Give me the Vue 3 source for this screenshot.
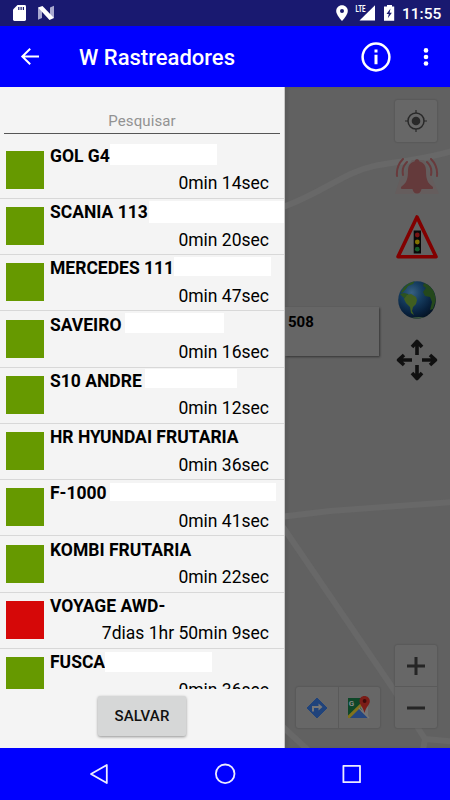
<script setup>
const GREEN = 'online'
const RED = 'offline'
const vehicles = [
  { name: 'GOL G4', time: '0min 14sec', state: GREEN, mask: 'm1' },
  { name: 'SCANIA 113', time: '0min 20sec', state: GREEN, mask: 'm2' },
  { name: 'MERCEDES 111', time: '0min 47sec', state: GREEN, mask: 'm3' },
  { name: 'SAVEIRO', time: '0min 16sec', state: GREEN, mask: 'm4' },
  { name: 'S10 ANDRE', time: '0min 12sec', state: GREEN, mask: 'm5' },
  { name: 'HR HYUNDAI FRUTARIA', time: '0min 36sec', state: GREEN },
  { name: 'F-1000', time: '0min 41sec', state: GREEN, mask: 'm7' },
  { name: 'KOMBI FRUTARIA', time: '0min 22sec', state: GREEN },
  { name: 'VOYAGE AWD-', time: '7dias 1hr 50min 9sec', state: RED },
  { name: 'FUSCA', time: '0min 36sec', state: GREEN, mask: 'm10' },
]
</script>

<template>
  <div class="screen">
    <header class="status">
      <svg class="left-icons" width="60" height="26" viewBox="0 0 60 26">
        <path d="M17.5 5H24.6Q26 5 26 6.4V19.6Q26 21 24.6 21H14.4Q13 21 13 19.6V9.5Z" fill="#fff" />
        <path d="M18.8 7v3M21.1 7v3M23.4 7v3" stroke="#191970" stroke-width="1.2" />
        <path d="M38 7.5L42 9v9L38 19.7ZM54 5.7V18L50 16.5V7.5Z" fill="#a9a9d0" />
        <path d="M38 7.5L42.5 6L54 18L49.5 20Z" fill="#fff" />
      </svg>
      <svg class="right-icons" width="70" height="26" viewBox="330 0 70 26">
        <path d="M342 5.3C338.7 5.3 336.200 7.800 336.200 11C336.200 15.200 342 21 342 21S347.800 15.200 347.800 11C347.800 7.800 345.300 5.300 342 5.300Z" fill="#fff" />
        <circle cx="342" cy="11" r="2" fill="#191970" />
        <path d="M375 5.300V20.500H359.500Z" fill="#fff" />
        <text class="lte" x="355.600" y="12.200" textLength="10" lengthAdjust="spacingAndGlyphs">LTE</text>
        <path d="M387 5h5v1.500h2.200v14.300h-10.200V6.500h3z" fill="#fff" />
        <path d="M390.500 8.500L386.500 14h2.300l-1 4.300L391.900 12.700h-2.300z" fill="#191970" />
      </svg>
      <span class="clock">11:55</span>
    </header>

    <div class="toolbar">
      <svg width="20" height="20" viewBox="0 0 20 20" class="back">
        <path d="M10.200 1.700L2.300 9.500L10.200 17.300M2.300 9.500H19" fill="none" stroke="#fff" stroke-width="2" />
      </svg>
      <h1>W Rastreadores</h1>
      <svg width="30" height="30" viewBox="0 0 30 30" class="info">
        <circle cx="15" cy="15" r="13.400" fill="none" stroke="#fff" stroke-width="2.500" />
        <path d="M13.500 7.500h3v2.900h-3zM13.500 12.700h3v9.500h-3z" fill="#fff" />
      </svg>
      <svg width="6" height="20" viewBox="0 0 6 20" class="more">
        <g fill="#fff"><circle cx="3" cy="3.400" r="2.300" /><circle cx="3" cy="10" r="2.300" /><circle cx="3" cy="16.500" r="2.300" /></g>
      </svg>
    </div>

    <main class="content">
      <aside class="drawer">
        <div class="search">Pesquisar</div>
        <ul class="list">
          <li v-for="v in vehicles" :key="v.name" class="row">
            <span class="square" :class="v.state"></span>
            <div class="details">
              <div class="name"><span class="label">{{ v.name }}</span><i v-if="v.mask" class="mask" :class="v.mask"></i></div>
              <div class="time">{{ v.time }}</div>
            </div>
          </li>
        </ul>
        <div class="footer"><button class="save">SALVAR</button></div>
      </aside>

      <section class="map">
        <svg class="roads" width="165" height="661" viewBox="285 87 165 661">
          <g fill="none" stroke="#686868" stroke-width="6" stroke-linejoin="round">
            <path d="M283 207C312 197 338 179 353 173C370 165 386 164 405 161C422 158 436 156 452 151" />
            <path d="M284 516.500L330 511L452 502" />
            <path d="M283 527L392 687L425 739L452 741.500M425 739L423 750" />
            <path d="M283 727L309 751" />
          </g>
        </svg>
        <div class="popup">508</div>
        <div class="tools">
          <div class="locate">
            <svg width="24" height="24" viewBox="0 0 24 24">
              <circle cx="12" cy="12" r="8" fill="none" stroke="#292929" stroke-width="1.500" />
              <circle cx="12" cy="12" r="4.300" fill="#292929" />
              <path d="M12 1v3M12 20v3M1 12h3M20 12h3" stroke="#292929" stroke-width="1.200" />
            </svg>
          </div>
          <svg class="bell" width="44" height="38" viewBox="0 0 44 38">
            <path d="M5 22L17 3H29L44 37H0Z" fill="#655d5d" />
            <path d="M22 2Q24 2 24.500 4.500C29 5.500 31 9 31 14C31 21 32 26 37.500 29.500Q39 31.500 37 32H26.500Q25.500 36.500 22 36.500T17.500 32H7Q5 31.500 6.500 29.500C12 26 13 21 13 14C13 9 15 5.500 19.500 4.500Q20 2 22 2Z" fill="#643a3b" />
            <g fill="none" stroke="#693a3c" stroke-width="2" stroke-linecap="round">
              <path d="M8 2Q1 9 2 19M12 5Q6.500 10 8 18M36 2Q43 9 42 19M32 5Q37.500 10 36 18" />
            </g>
          </svg>
          <svg class="warning" width="44" height="47" viewBox="0 0 44 47">
            <path d="M22 4L41 43.700H3Z" fill="#626262" stroke="#820000" stroke-width="3.600" stroke-linejoin="round" />
            <path d="M18.700 17.500h7.300v23h-7.300z" fill="#080808" />
            <circle cx="22.300" cy="22" r="2.400" fill="#781414" />
            <circle cx="22.300" cy="29" r="2.400" fill="#817100" />
            <circle cx="22.300" cy="36.200" r="2.400" fill="#145c2a" />
          </svg>
          <svg class="globe" width="40" height="40" viewBox="0 0 40 40">
            <defs>
              <radialGradient id="sea" cx=".36" cy=".3" r=".75">
                <stop offset="0" stop-color="#376080" /><stop offset=".35" stop-color="#173f62" />
                <stop offset=".75" stop-color="#08213d" /><stop offset="1" stop-color="#041222" />
              </radialGradient>
              <clipPath id="disc"><circle cx="20" cy="20" r="18.800" /></clipPath>
            </defs>
            <circle cx="20" cy="20" r="18.800" fill="url(#sea)" />
            <g clip-path="url(#disc)">
              <path d="M4 12L7 7L12 3L18 1L16 4L11 6L9 9L5 13ZM3 14L7 13L11 14L12 16L8 17L10 20L6 17Z" fill="#2c531f" />
              <path d="M10 15L14 14L19 17L20 20L19 24L16 27L15 31L17 35L14 33L13 27L9 23L7 19Z" fill="#405e20" />
              <path d="M27 3L32 5L37 11L39 20L36 29L33 30L35 22L33 17L28 16L26 12L29 8L26 6Z" fill="#24481c" />
              <path d="M14 38Q20 36.500 28 37.500V40H14Z" fill="#3c573e" />
            </g>
          </svg>
          <svg class="move" width="44" height="44" viewBox="0 0 44 44">
            <g fill="none" stroke="#101010" stroke-width="3.600" stroke-linejoin="round">
              <path d="M22 17V4M17 9L22 3.500L27 9" />
              <path d="M22 27V40M17 35L22 40.500L27 35" />
              <path d="M17 22H4M9 17L3.500 22L9 27" />
              <path d="M27 22H40M35 17L40.500 22L35 27" />
            </g>
          </svg>
        </div>
        <div class="links">
          <div class="link">
            <svg width="24" height="24" viewBox="0 0 24 24">
              <path d="M12 2L22 12L12 22L2 12Z" fill="#20437b" stroke="#20437b" stroke-linejoin="round" />
              <path d="M8 15.500V11H15" fill="none" stroke="#777" stroke-width="2" />
              <path d="M13.500 7.500L17.500 11L13.500 14.500Z" fill="#777" />
            </svg>
          </div>
          <div class="link">
            <svg width="26" height="26" viewBox="0 0 26 26">
              <path d="M2 3H20V12L5 23H2Z" fill="#0e4728" />
              <path d="M12 13L22 23H4Z" fill="#25467f" />
              <path d="M14 12L22 4V23Z" fill="#747474" />
              <path d="M2 20.500L16 7L18 9L4 23H2Z" fill="#81721d" />
              <path d="M13 13L23 23" stroke="#777" stroke-width="1.500" />
              <path d="M18.500 1C15.500 1 13.500 3.300 13.500 6C13.500 10 17.200 12 18.500 18C19.800 12 23.800 10 23.800 6C23.800 3.300 21.500 1 18.500 1Z" fill="#7b1d18" />
              <circle cx="18.600" cy="6" r="1.900" fill="#3c0b0a" />
              <text class="g" x="2.700" y="10.800">G</text>
            </svg>
          </div>
        </div>
        <div class="zoom">
          <div class="zoom-btn"><svg width="20" height="20" viewBox="0 0 20 20"><path d="M10 1v18M1 10h18" stroke="#252525" stroke-width="3" /></svg></div>
          <div class="zoom-btn"><svg width="20" height="20" viewBox="0 0 20 20"><path d="M1 10h18" stroke="#252525" stroke-width="3" /></svg></div>
        </div>
      </section>
    </main>

    <nav class="navbar">
      <svg width="450" height="52" viewBox="0 0 450 52">
        <g fill="none" stroke="#ebebff" stroke-width="1.800" stroke-linejoin="round">
          <path d="M106.800 17V35L91 26Z" />
          <circle cx="225.200" cy="25.800" r="9.300" />
          <rect x="343.400" y="17.800" width="16.600" height="16.400" />
        </g>
      </svg>
    </nav>
  </div>
</template>

<style>
body { margin: 0; overflow: hidden; }
</style>

<style scoped>
.screen { width: 450px; height: 800px; display: flex; flex-direction: column; overflow: hidden; font-family: Roboto, sans-serif; color: #000; }
.status { height: 26px; flex: none; display: flex; background: #191970; }
.right-icons { margin-left: 270px; }
.lte { font: bold 9px Roboto, sans-serif; fill: #fff; }
.clock { width: 50px; box-sizing: border-box; padding-left: 2px; color: #fff; font-size: 15.500px; font-weight: 500; line-height: 28px; white-space: nowrap; }
.toolbar { height: 61px; flex: none; display: flex; align-items: center; background: #0000ff; }
.back { margin: 1px 0 0 20px; }
.toolbar h1 { margin: 3px 0 0 39px; width: 282px; color: #fff; font-size: 22px; font-weight: 500; line-height: 30px; }
.info { margin-top: 1px; }
.more { margin-left: 32px; margin-top: 1px; }
.content { height: 661px; flex: none; display: flex; }
.drawer { width: 285px; flex: none; box-sizing: border-box; border-right: 1px solid #c8c8c8; background: #f4f4f4; display: flex; flex-direction: column; overflow: hidden; }
.search { flex: none; height: 47px; box-sizing: border-box; margin: 0 4px; padding-top: 24px; border-bottom: 1px solid #555; color: #929292; text-align: center; font-size: 15px; line-height: 20px; letter-spacing: .1px; }
.list { list-style: none; flex: none; height: 546.400px; margin: 8.600px 0 0; padding: 0; overflow: hidden; }
.row { height: 56.250px; box-sizing: border-box; display: flex; border-bottom: 1px solid #d8d8d8; padding: 8.400px 0 0 6px; }
.square { width: 38px; height: 38px; flex: none; }
.online { background: #669900; }
.offline { background: #d60808; }
.details { flex: 1; min-width: 0; padding: 0 15px 0 6px; margin-top: -7px; }
.name { height: 24px; display: flex; font-size: 17.500px; font-weight: 700; line-height: 23px; white-space: nowrap; }
.label { padding-top: 1px; }
.time { margin-top: 3.500px; font-size: 17.500px; line-height: 24px; text-align: right; }
.mask { flex: none; height: 19px; background: #fff; }
.m1 { width: 107px; height: 21px; }
.m2 { width: 135px; height: 22px; margin: 1px 0 0 1.500px; }
.m3 { width: 97px; margin: 1px 0 0; }
.m4 { width: 99px; height: 20px; margin-left: 3.500px; }
.m5 { width: 92px; margin: .5px 0 0 3.500px; }
.m7 { width: 166px; height: 18px; margin: 2px 0 0 3.500px; }
.m10 { width: 107px; height: 20px; margin-top: 1.500px; }
.footer { flex: 1; display: flex; justify-content: center; align-items: flex-start; padding-top: 7px; }
.save { width: 88px; height: 40px; border: 0; border-radius: 2px; background: #d6d7d7; color: #111; font: 500 15px Roboto, sans-serif; letter-spacing: .1px; box-shadow: 0 1px 3px #0006; }
.map { width: 165px; position: relative; background: #616161; overflow: hidden; box-shadow: inset 3px 0 3px #0001; }
.roads { display: block; }
.popup { position: absolute; left: 0; top: 220px; width: 94px; height: 49px; box-sizing: border-box; padding: 5px 3px; background: #666; box-shadow: 1px 1px 2px #0007; font-size: 15px; font-weight: 700; line-height: 20px; }
.tools { position: absolute; left: 110px; top: 13px; width: 44px; display: flex; flex-direction: column; }
.tools > svg { display: block; }
.locate, .zoom, .links { background: #676767; box-shadow: 0 0 2px #0004; border-radius: 2px; }
.locate { width: 42px; height: 42px; display: grid; place-items: center; }
.bell { margin-top: 15px; }
.warning { margin-top: 18px; }
.globe { margin: 20px 0 0 2px; }
.move { margin-top: 17.500px; }
.links { position: absolute; left: 11px; top: 600px; width: 84px; height: 41px; display: flex; }
.link { flex: 1; display: grid; place-items: center; }
.link + .link { border-left: 1px solid #5a5a5a; }
.g { font: bold 8px Roboto, sans-serif; fill: #888; }
.zoom { position: absolute; left: 110px; top: 558px; width: 42px; height: 83px; display: flex; flex-direction: column; }
.zoom-btn { flex: 1; display: grid; place-items: center; }
.zoom-btn + .zoom-btn { border-top: 1px solid #5a5a5a; }
.navbar { height: 52px; flex: none; background: #0000ff; }
</style>
